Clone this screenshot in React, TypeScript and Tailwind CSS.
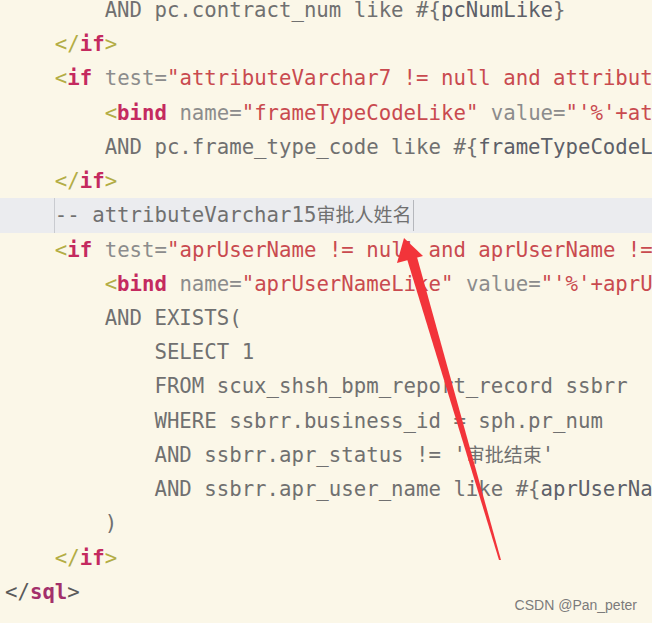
import React from 'react';

type Tok = [string, string?];

const T = 'text-[#707070]';
const BR = 'text-[#b3ad45]';
const KW = 'text-[#c42a5f] font-bold';
const AT = 'text-[#8c8c8c]';
const STR = 'text-[#c94a4f]';
const VAR = 'text-[#5d6068]';

const lines: Tok[][] = [
  [['        AND pc.contract_num like #{', T], ['pcNumLike', VAR], ['}', T]],
  [['    '], ['</', BR], ['if', KW], ['>', BR]],
  [['    '], ['<', BR], ['if', KW], [' test', AT], ['=', AT], ['"attributeVarchar7 != null and attributeVarchar7 != \'\'"', STR], ['>', BR]],
  [['        '], ['<', BR], ['bind', KW], [' name', AT], ['=', AT], ['"frameTypeCodeLike"', STR], [' value', AT], ['=', AT], ['"\'%\'+attributeVarchar7+\'%\'"', STR], ['/>', BR]],
  [['        AND pc.frame_type_code like #{', T], ['frameTypeCodeLike', VAR], ['}', T]],
  [['    '], ['</', BR], ['if', KW], ['>', BR]],
  [],
  [['    '], ['<', BR], ['if', KW], [' test', AT], ['=', AT], ['"aprUserName != null and aprUserName != \'\'"', STR], ['>', BR]],
  [['        '], ['<', BR], ['bind', KW], [' name', AT], ['=', AT], ['"aprUserNameLike"', STR], [' value', AT], ['=', AT], ['"\'%\'+aprUserName+\'%\'"', STR], ['/>', BR]],
  [['        AND EXISTS(', T]],
  [['            SELECT 1', T]],
  [['            FROM scux_shsh_bpm_report_record ssbrr', T]],
  [['            WHERE ssbrr.business_id = sph.pr_num', T]],
  [['            AND ssbrr.apr_status != \'', T], ['审批结束', 'text-[19px] ' + T], ['\'', T]],
  [['            AND ssbrr.apr_user_name like #{', T], ['aprUserName', VAR], ['}', T]],
  [['        )', T]],
  [['    '], ['</', BR], ['if', KW], ['>', BR]],
  [['</', 'text-[#5a5a5a]'], ['sql', 'text-[#a3306b] font-bold'], ['>', 'text-[#5a5a5a]']],
];

export default function App() {
  return (
    <div
      className="relative w-[652px] h-[623px] overflow-hidden bg-[#fbf7e8]"
      style={{ fontFamily: '"DejaVu Sans Mono", "Noto Sans CJK SC", monospace' }}
    >
      <div className="flex flex-col text-[20.7px] leading-[34.24px]">
        {lines.map((toks, i) =>
          i === 6 ? (
            <div key={i} className="h-[34.24px] bg-[#ebecef] pl-[5px] whitespace-pre flex">
              <span>{'    '}</span>
              <span className="-ml-[1px] border-l border-[#c9cbd0] text-[#707070]">
                -- attributeVarchar15<span className="text-[19px]">审批人姓名</span>
              </span>
              <span className="ml-[2px] my-[2px] border-l border-[#b5b7bc]" />
            </div>
          ) : (
            <div
              key={i}
              className={
                i === 0
                  ? 'h-[20px] mb-[7.14px] leading-[20px] pl-[5px] whitespace-pre'
                  : 'h-[34.24px] pl-[5px] whitespace-pre'
              }
            >
              {toks.map(([txt, cls], j) => (
                <span key={j} className={cls}>
                  {txt}
                </span>
              ))}
            </div>
          )
        )}
      </div>

      {/* red annotation arrow */}
      <svg className="absolute inset-0" width="652" height="623" viewBox="0 0 652 623">
        <polygon points="404,238 397,263 423,256" fill="#f2343a" />
        <polygon points="407,259 417,257 501,560 499,560" fill="#f2343a" />
      </svg>

      <div
        className="absolute right-[15px] bottom-[7px] text-[14px] text-[#7b7b7b]"
        style={{ fontFamily: '"Liberation Sans", Arial, sans-serif' }}
      >
        CSDN @Pan_peter
      </div>
    </div>
  );
}
